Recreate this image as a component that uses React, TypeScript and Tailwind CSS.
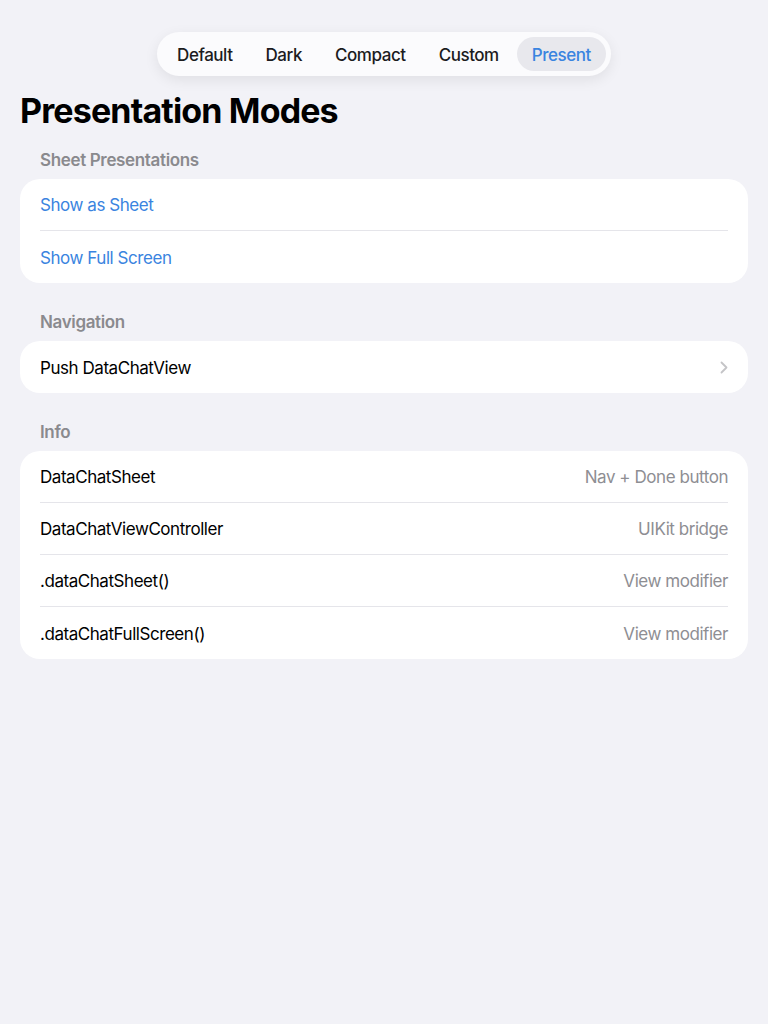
import React from "react";

const tabs = ["Default", "Dark", "Compact", "Custom", "Present"];

function Chevron() {
  return (
    <svg width="8" height="13" viewBox="0 0 8 13" fill="none">
      <path d="M1.5 1.5l5 5-5 5" stroke="#c4c4c7" strokeWidth="1.8" strokeLinecap="round" strokeLinejoin="round" />
    </svg>
  );
}

function Header({ children }: { children: React.ReactNode }) {
  return (
    <div className="px-5 h-[22px] pt-[2px] leading-[22px] text-[17px] tracking-[-0.35px] font-semibold text-[#8a8a8e] mb-[10px]">
      {children}
    </div>
  );
}

function Row({ left, right, blue, chevron, last }: { left: string; right?: string; blue?: boolean; chevron?: boolean; last?: boolean }) {
  return (
    <div className="px-5">
      <div className={"h-[52px] flex items-center justify-between " + (last ? "" : "border-b border-[#e5e5ea]")}>
        <span className={"pt-[3px] text-[17px] tracking-[-0.45px] " + (blue ? "text-[#3a84e0]" : "text-black")}>{left}</span>
        {right && <span className="pt-[3px] text-[17px] tracking-[-0.45px] text-[#8e8e93]">{right}</span>}
        {chevron && <Chevron />}
      </div>
    </div>
  );
}

export default function App() {
  return (
    <div className="min-h-[1024px] w-full bg-[#f2f2f7] pt-8" style={{ fontFamily: "Inter, 'Noto Sans', sans-serif" }}>
      <div className="flex justify-center">
        <div className="flex items-center gap-[3px] p-[5px] bg-[#fbfbfd] rounded-full shadow-[0_4px_14px_rgba(0,0,0,0.08)]">
          {tabs.map((t) => (
            <div
              key={t}
              className={
                "h-[34px] pt-[3px] px-[15px] flex items-center rounded-full text-[17px] tracking-[-0.45px] font-medium " +
                (t === "Present" ? "bg-[#e8e8ed] text-[#3a84e0]" : "text-[#1c1c1e]")
              }
            >
              {t}
            </div>
          ))}
        </div>
      </div>

      <h1 className="px-5 mt-[14px] h-[41px] leading-[41px] text-[34px] font-bold text-black tracking-tight">Presentation Modes</h1>

      <div className="px-5 mt-[16px]">
        <Header>Sheet Presentations</Header>
        <div className="bg-white rounded-[20px] overflow-hidden">
          <Row left="Show as Sheet" blue />
          <Row left="Show Full Screen" blue last />
        </div>

        <div className="mt-[26px]">
          <Header>Navigation</Header>
          <div className="bg-white rounded-[20px] overflow-hidden">
            <Row left="Push DataChatView" chevron last />
          </div>
        </div>

        <div className="mt-[26px]">
          <Header>Info</Header>
          <div className="bg-white rounded-[20px] overflow-hidden">
            <Row left="DataChatSheet" right="Nav + Done button" />
            <Row left="DataChatViewController" right="UIKit bridge" />
            <Row left=".dataChatSheet()" right="View modifier" />
            <Row left=".dataChatFullScreen()" right="View modifier" last />
          </div>
        </div>
      </div>
    </div>
  );
}
